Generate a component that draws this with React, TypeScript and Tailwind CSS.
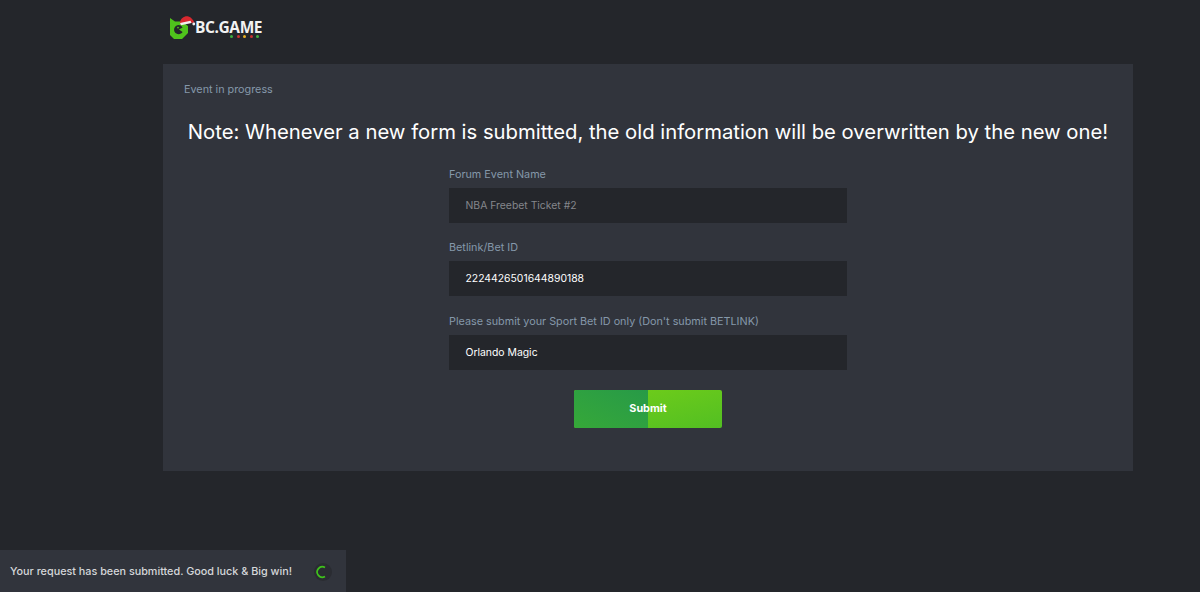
import * as React from "react"

function Logo() {
  return (
    <div className="flex h-[25px] items-center ml-[7px]">
      <svg width="26" height="25" viewBox="0 0 26 25" className="shrink-0">
        <path d="M0 3 L5 6.5 H12 L18 11 V18 L12 24 H4 L0 20 Z" fill="#4fc31c" />
        <path d="M8.5 10 A4.6 4.6 0 1 0 12.6 17 L9 14.6 L12.6 12.4 A4.6 4.6 0 0 0 8.5 10 Z" fill="#24262b" />
        <circle cx="8" cy="12.6" r="0.9" fill="#4fc31c" />
        <path d="M10 7.5 C10.5 3 15 0.5 18.5 1.5 C21 2.2 23 4.5 24.5 7.5 L21 8 L10.5 9.5 Z" fill="#d8282f" />
        <path d="M10 8 L20.5 5.8 L21.5 8 L11 10.2 Z" fill="#f0f0f0" />
        <circle cx="23.8" cy="9" r="1.4" fill="#f0f0f0" />
      </svg>
      <div className="relative ml-[-1px]">
        <span className="block font-['Open_Sans',sans-serif] text-[15.5px] leading-[25px] font-bold tracking-[-0.4px] text-[#f2f2f2]">BC.GAME</span>
        <span className="absolute left-[35px] top-[20px] flex gap-[3.5px]">
          <i className="block size-[3px] rounded-full bg-[#3fae3c]" />
          <i className="block size-[3px] rounded-full bg-[#c9302f]" />
          <i className="block size-[3px] rounded-full bg-[#e8b020]" />
          <i className="block size-[3px] rounded-full bg-[#c9302f]" />
          <i className="block size-[3px] rounded-full bg-[#3fae3c]" />
        </span>
      </div>
    </div>
  )
}

function Field({ label, value, muted }: { label: string; value: string; muted?: boolean }) {
  return (
    <div className="w-[398px]">
      <div className="h-[15px] text-[10.8px] leading-[15px] text-[#8598aa]">{label}</div>
      <div className={`mt-[6px] h-[35px] bg-[#24262b] pl-[16.5px] text-[10.4px] leading-[35px] ${muted ? "text-[#85878c]" : "text-white"}`}>
        {value}
      </div>
    </div>
  )
}

export default function App() {
  return (
    <div className="relative h-[592px] w-[1200px] overflow-hidden bg-[#24262b] font-['Inter',sans-serif]">
      <div className="ml-[163px] w-[970px] pt-[15px]">
        <Logo />
        <div className="mt-[24px] h-[407px] bg-[#31343c] pt-[18px]">
          <div className="pl-[21px] text-[10.8px] leading-[15px] text-[#8598aa]">Event in progress</div>
          <h1 className="mt-[21px] text-center text-[20.27px] leading-[28px] font-normal text-white">
            Note: Whenever a new form is submitted, the old information will be overwritten by the new one!
          </h1>
          <div className="mt-[20.7px] flex flex-col items-center gap-[17.5px]">
            <Field label="Forum Event Name" value="NBA Freebet Ticket #2" muted />
            <Field label="Betlink/Bet ID" value="2224426501644890188" />
            <Field label="Please submit your Sport Bet ID only (Don't submit BETLINK)" value="Orlando Magic" />
          </div>
          <div className="mt-[20.3px] flex justify-center">
            <button className="relative flex h-[38px] w-[148px] items-center justify-center overflow-hidden rounded-[2px] bg-gradient-to-br from-[#74cf17] to-[#52bf22] text-[10.8px] font-bold text-white">
              <span className="absolute inset-y-0 left-0 w-1/2 bg-gradient-to-tr from-[#36a838] to-[#279a47]" />
              <span className="relative">Submit</span>
            </button>
          </div>
        </div>
      </div>
      <div className="absolute bottom-0 left-0 flex h-[42px] w-[346px] items-center bg-[#31343c] pt-[2px] pl-[10px] text-[10.8px] font-medium text-[#d5d7da]">
        <span>Your request has been submitted. Good luck &amp; Big win!</span>
        <span className="absolute left-[314px] top-[13px] flex size-[18px] items-center justify-center rounded-full bg-[#2a2c32]">
          <svg width="18" height="18" viewBox="0 0 18 18">
            <path d="M11 4.5 A5.2 5.2 0 1 0 11 13.5" fill="none" stroke="#3fc21c" strokeWidth="1.7" />
          </svg>
        </span>
      </div>
    </div>
  )
}
